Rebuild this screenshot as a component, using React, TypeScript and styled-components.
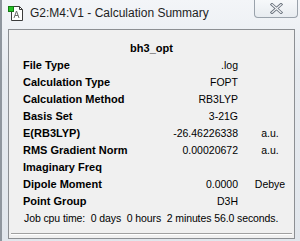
import React from 'react';
import styled, { createGlobalStyle } from 'styled-components';

const GlobalStyle = createGlobalStyle`
    html, body {
        margin: 0;
        padding: 0;
        background: #ffffff;
    }
`;

const Window = styled.div`
    width: 300px;
    height: 241px;
    box-sizing: border-box;
    display: flex;
    flex-direction: column;
    background: linear-gradient(180deg, #f3f5f8 0%, #e6eaef 30%, #e1e6ec 100%);
    border-left: 2px solid #8f969e;
    font-family: 'Liberation Sans', Arial, sans-serif;
    overflow: hidden;
`;

const TitleBar = styled.div`
    height: 29px;
    display: flex;
    align-items: flex-start;
    padding-left: 6px;
`;

const TitleIcon = styled.svg`
    margin-top: 5px;
    flex-shrink: 0;
`;

const TitleText = styled.span`
    margin-top: 6px;
    margin-left: 6px;
    font-size: 12px;
    color: #1e1e1e;
    white-space: nowrap;
`;

const CloseButton = styled.div`
    margin-left: auto;
    margin-right: 2px;
    width: 44px;
    height: 18px;
    box-sizing: border-box;
    border: 1px solid #9aa2ab;
    border-top: none;
    border-radius: 0 0 4px 4px;
    background: linear-gradient(180deg, #f6f8fa 0%, #e8ecf0 100%);
    display: flex;
    align-items: center;
    justify-content: center;
`;

const Panel = styled.div`
    flex: 1;
    margin: 0 5px 2px 6px;
    border: 1px solid #8c8f93;
    background: #f0f0f0;
    display: flex;
    flex-direction: column;
    padding: 10px 0 0;
`;

const Heading = styled.div`
    height: 17px;
    line-height: 17px;
    text-align: center;
    font-weight: bold;
    font-size: 11px;
    color: #000;
`;

const Rows = styled.div`
    display: grid;
    grid-template-columns: 1fr 90px 44px;
    grid-auto-rows: 17px;
    column-gap: 10px;
    padding-left: 14px;
    padding-right: 2px;
`;

const Label = styled.span`
    font-weight: bold;
    font-size: 11px;
    line-height: 17px;
    color: #000;
    white-space: nowrap;
`;

const Value = styled.span`
    font-size: 10.5px;
    line-height: 17px;
    text-align: right;
    color: #000;
    white-space: nowrap;
`;

const Unit = styled.span`
    font-size: 10.5px;
    line-height: 17px;
    text-align: center;
    color: #000;
`;

const CpuTime = styled.div`
    height: 17px;
    line-height: 17px;
    padding-left: 15px;
    font-size: 10.5px;
    letter-spacing: -0.1px;
    color: #000;
    white-space: pre;
`;

const Groove = styled.div`
    margin: auto 2px 3px 2px;
    height: 0;
    border-top: 1px solid #a0a0a0;
    border-bottom: 1px solid #ffffff;
`;

interface SummaryRow {
    label: string;
    value: string;
    unit?: string;
}

const rows: SummaryRow[] = [
    { label: 'File Type', value: '.log' },
    { label: 'Calculation Type', value: 'FOPT' },
    { label: 'Calculation Method', value: 'RB3LYP' },
    { label: 'Basis Set', value: '3-21G' },
    { label: 'E(RB3LYP)', value: '-26.46226338', unit: 'a.u.' },
    { label: 'RMS Gradient Norm', value: '0.00020672', unit: 'a.u.' },
    { label: 'Imaginary Freq', value: '' },
    { label: 'Dipole Moment', value: '0.0000', unit: 'Debye' },
    { label: 'Point Group', value: 'D3H' },
];

const AppIcon = () => (
    <TitleIcon width="16" height="16" viewBox="0 0 16 16">
        <path d="M3.5 1.5 H11.5 L14.5 4.5 V15.5 H3.5 Z" fill="#ffffff" stroke="#3c3c3c" />
        <path d="M11.5 1.5 V4.5 H14.5" fill="none" stroke="#3c3c3c" />
        <path d="M6 13 L8.5 6 L11 13 M7 10.5 H10" fill="none" stroke="#6a6a6a" strokeWidth="1" />
        <rect x="0.5" y="1.5" width="5" height="5" fill="#27c327" stroke="#157a15" />
    </TitleIcon>
);

const CloseGlyph = () => (
    <svg width="13" height="11" viewBox="0 0 13 11">
        <path d="M2 1.5 L11 9.5 M11 1.5 L2 9.5" stroke="#6a727d" strokeWidth="3" strokeLinecap="square" />
        <path d="M2 1.5 L11 9.5 M11 1.5 L2 9.5" stroke="#f4f6f8" strokeWidth="1.2" strokeLinecap="square" />
    </svg>
);

const App: React.FC = () => {
    return (
        <>
            <GlobalStyle />
            <Window>
                <TitleBar>
                    <AppIcon />
                    <TitleText>G2:M4:V1 - Calculation Summary</TitleText>
                    <CloseButton>
                        <CloseGlyph />
                    </CloseButton>
                </TitleBar>
                <Panel>
                    <Heading>bh3_opt</Heading>
                    <Rows>
                        {rows.map((row) => (
                            <React.Fragment key={row.label}>
                                <Label>{row.label}</Label>
                                <Value>{row.value}</Value>
                                <Unit>{row.unit || ''}</Unit>
                            </React.Fragment>
                        ))}
                    </Rows>
                    <CpuTime>Job cpu time:  0 days  0 hours  2 minutes 56.0 seconds.</CpuTime>
                    <Groove />
                </Panel>
            </Window>
        </>
    );
};

export default App;
